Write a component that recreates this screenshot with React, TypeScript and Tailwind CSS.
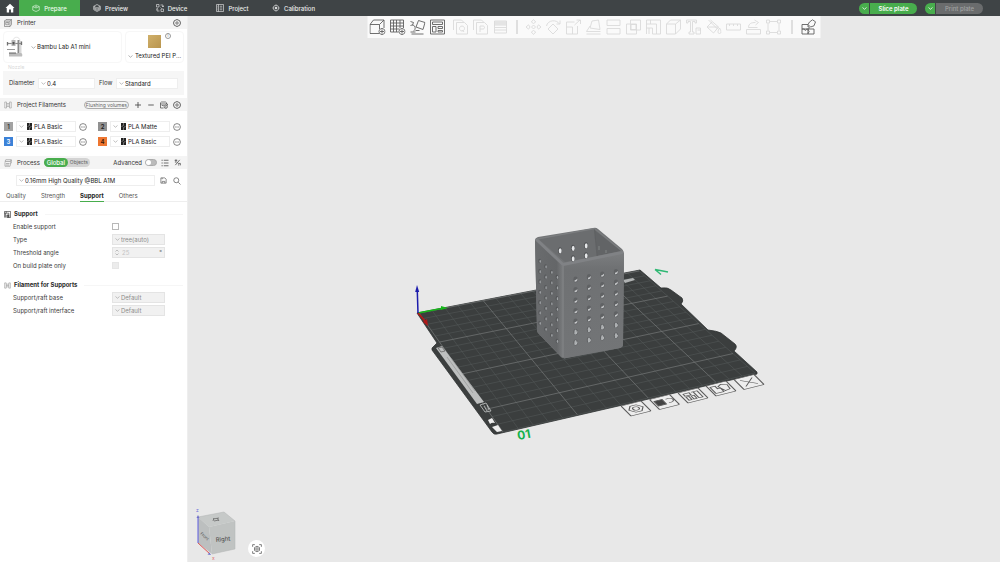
import React, { useState } from "react";

type IconProps = { className?: string };

function Icon({ className = "size-2", children }: { className?: string; children: React.ReactNode }) {
  return (
    <svg
      viewBox="0 0 16 16"
      className={`shrink-0 ${className}`}
      fill="none"
      stroke="currentColor"
      strokeWidth={1.2}
      strokeLinejoin="round"
      aria-hidden="true"
    >
      {children}
    </svg>
  );
}

const HomeIcon = ({ className }: IconProps) => (
  <Icon className={className}>
    <path d="M8 1 0.8 8h2v7h3.7v-4.5h3V15h3.7V8h2z" fill="currentColor" stroke="none" />
  </Icon>
);
const PrepareIcon = ({ className }: IconProps) => (
  <Icon className={className}>
    <path d="M5 3.500 1.500 5.200v7L8 15l6.500-2.800v-7L11 3.500M1.500 5.200 8 8l6.500-2.800M5 3.500 8 2l3 1.500M6 5l2 1 2-1" />
  </Icon>
);
const PreviewIcon = ({ className }: IconProps) => (
  <Icon className={className}>
    <path d="M8 1 14.500 4.500v7L8 15l-6.500-3.500v-7zM1.500 4.500 8 8l6.500-3.500M1.500 7 8 10.500 14.500 7M1.500 9.300 8 12.800l6.500-3.500" />
  </Icon>
);
const DeviceIcon = ({ className }: IconProps) => (
  <Icon className={className}>
    <path d="M1 1h5v5H1zM10 10h5v5h-5zM9 2h5v4M2 9v5h5M12 4l2 2 1.500-2M4.500 11 2 9 .800 11M9 7l2 2" />
  </Icon>
);
const ProjectIcon = ({ className }: IconProps) => (
  <Icon className={className}>
    <path d="M1 1h14v14H1zM5 1v14M7.500 4.500h5M7.500 8h5M7.500 11.500h5M2.500 4.500h1M2.500 8h1M2.500 11.500h1" />
  </Icon>
);
const CalibrationIcon = ({ className }: IconProps) => (
  <Icon className={className}>
    <circle cx="8" cy="8" r="5.500" />
    <circle cx="8" cy="8" r="2" fill="currentColor" />
    <path d="M8 .800v2M8 13.200v2M.800 8h2M13.200 8h2" />
  </Icon>
);
const GearIcon = ({ className }: IconProps) => (
  <Icon className={className}>
    <path d="M5.500 1.500h5l1 1.700 2 .300L15 8l-1.500 4.500-2 .300-1 1.700h-5l-1-1.700-2-.300L1 8l1.500-4.500 2-.300z" strokeWidth={1.600} />
    <circle cx="8" cy="8" r="2.400" strokeWidth={1.400} />
  </Icon>
);
const PrinterIcon = ({ className }: IconProps) => (
  <Icon className={className}>
    <path d="M1 4h11v11H1zM1 4l3-3h11v10l-3 4M12 4l3-3M3.500 6.500h6v5h-6zM6.500 6.500V9" />
  </Icon>
);
const SpoolIcon = ({ className }: IconProps) => (
  <Icon className={className}>
    <path d="M1.500 2v12M5 2v12M11 2v12M14.500 2v12M1.500 2H5M1.500 14H5M11 2h3.500M11 14h3.500M5 5h6M5 8h6M5 11h6" />
  </Icon>
);
const ProcessIcon = ({ className }: IconProps) => (
  <Icon className={className}>
    <path d="M3.500 1.500h11L13 5H2zM2 6.500v8h10l1.500-8M14.500 1.500v7M4 9h7M4 12h6" />
  </Icon>
);
const PlusIcon = ({ className }: IconProps) => (
  <Icon className={className}>
    <path d="M8 2v12M2 8h12" strokeWidth={1.700} />
  </Icon>
);
const MinusIcon = ({ className }: IconProps) => (
  <Icon className={className}>
    <path d="M2.500 8h11" strokeWidth={1.700} />
  </Icon>
);
const SyncIcon = ({ className }: IconProps) => (
  <Icon className={className}>
    <path d="M1 6V3.500L3 2h8l2 1.500V6M1 6h14v3M1 6v8h6M3.500 9h4" strokeWidth={1.400} />
    <circle cx="11.500" cy="11.500" r="3.300" strokeWidth={1.400} />
    <path d="M11.500 9.500v4" />
  </Icon>
);
const MoreIcon = ({ className }: IconProps) => (
  <Icon className={className}>
    <circle cx="8" cy="8" r="6.800" strokeWidth={1.400} />
    <path d="M4.500 8h7" strokeWidth={1.600} strokeDasharray="1.800 .800" />
  </Icon>
);
const ListIcon = ({ className }: IconProps) => (
  <Icon className={className}>
    <path d="M1 2.500h2.500M1 8h2.500M1 13.500h2.500M5.500 2.500H15M5.500 8H15M5.500 13.500H15" strokeWidth={1.500} />
  </Icon>
);
const CompareIcon = ({ className }: IconProps) => (
  <Icon className={className}>
    <path d="M3 14 13 2M1.500 3h6M4.500 1v5M9 10h5.500v4.500M9 13.500h3M2 7h4" strokeWidth={1.700} />
  </Icon>
);
const SaveIcon = ({ className }: IconProps) => (
  <Icon className={className}>
    <path d="M2 2h9l3 3v9H2zM5 14v-4h6v4M5 2v3" strokeWidth={1.500} />
  </Icon>
);
const SearchIcon = ({ className }: IconProps) => (
  <Icon className={className}>
    <circle cx="6.500" cy="6.500" r="5" strokeWidth={1.400} />
    <path d="m10.500 10.500 4.500 4.500" strokeWidth={1.400} />
  </Icon>
);
const SupportIcon = ({ className }: IconProps) => (
  <Icon className={className}>
    <path d="M1 15V1h14v14h-4M1 5h10v10M5 1v4M3.500 5v10" strokeWidth={1.400} />
    <path d="M6.500 9H11v6H6.500z" fill="currentColor" fillOpacity="0.600" />
  </Icon>
);
const Chevron = ({ className = "" }: IconProps) => (
  <svg viewBox="0 0 10 6" className={`h-[3px] w-[5px] shrink-0 ${className}`} fill="none" stroke="currentColor" strokeWidth={1.500} aria-hidden="true">
    <path d="m1 1 4 3.500L9 1" />
  </svg>
);

type SelectBoxProps = { id?: string; label?: string; value: string; disabled?: boolean; filament?: boolean; className?: string };

function SelectBox({ id, label, value, disabled, filament, className = "" }: SelectBoxProps) {
  return (
    <div
      className={`relative flex h-[11px] items-center border ${
        disabled ? "border-[#e4e4e4] bg-[#f1f1f1] text-[#8c8c8c]" : "border-[#eeeeee] bg-white text-[#222222]"
      } ${className}`}
    >
      <Chevron className="pointer-events-none absolute left-[2px] text-[#aaaaaa]" />
      {filament && (
        <svg viewBox="0 0 10 14" className="pointer-events-none absolute left-[10px] h-[7px] w-[5px]" aria-hidden="true">
          <path d="M0 0h10v14H0z" fill="#222" />
          <path d="M5 0v5L1 7M5 9v5M5 9l4-2" stroke="#aaa" strokeWidth="1.200" fill="none" />
        </svg>
      )}
      <select
        id={id}
        aria-label={label}
        disabled={disabled}
        className={`h-full w-full appearance-none truncate bg-transparent leading-[9px] opacity-100 outline-none ${filament ? "pl-[17px]" : "pl-[8px]"}`}
      >
        <option>{value}</option>
      </select>
    </div>
  );
}

const TABS = [
  { name: "Prepare", icon: PrepareIcon },
  { name: "Preview", icon: PreviewIcon },
  { name: "Device", icon: DeviceIcon },
  { name: "Project", icon: ProjectIcon },
  { name: "Calibration", icon: CalibrationIcon },
];

function TopBar() {
  return (
    <header className="flex h-4 shrink-0 items-center bg-[#3f4446] text-[6px] text-white">
      <button aria-label="Home" className="flex h-full w-[19px] items-center justify-center">
        <HomeIcon className="size-[10px]" />
      </button>
      <nav className="flex h-full">
        {TABS.map(({ name, icon: TabIcon }, i) => (
          <button
            key={name}
            className={`flex h-full w-[61px] items-center justify-center gap-[4px] font-medium ${i === 0 ? "bg-[#48ad4d] text-[#eefbee]" : "text-[#eeeeee]"}`}
          >
            <TabIcon className="size-[8px]" />
            {name}
          </button>
        ))}
      </nav>
      <div className="mr-[17px] ml-auto flex gap-2 font-medium">
        <div className="flex h-[11px] gap-px">
          <button aria-label="Slice options" className="flex w-[10px] items-center justify-center rounded-l-full bg-[#48ad4d]">
            <Chevron />
          </button>
          <button className="w-[47px] rounded-r-full bg-[#48ad4d] leading-[11px] font-semibold">Slice plate</button>
        </div>
        <div className="flex h-[11px] gap-px">
          <button aria-label="Print options" className="flex w-[10px] items-center justify-center rounded-l-full bg-[#48ad4d]">
            <Chevron />
          </button>
          <button disabled className="w-[47px] rounded-r-full bg-[#6a6c6d] leading-[11px] text-[#a0a2a2]">
            Print plate
          </button>
        </div>
      </div>
    </header>
  );
}

function SectionHeader({ icon, title, children }: { icon: React.ReactNode; title: string; children?: React.ReactNode }) {
  return (
    <div className="flex h-[13px] items-center bg-[#f4f4f4] pr-[6px] pl-[4px] text-[#666666]">
      {icon}
      <h2 className="ml-[5px] text-[#333333]">{title}</h2>
      {children}
    </div>
  );
}

const FILAMENTS = [
  { id: 1, name: "PLA Basic", chip: "bg-[#a3a3a3] text-[#333333]" },
  { id: 2, name: "PLA Matte", chip: "bg-[#919191] text-[#222222]" },
  { id: 3, name: "PLA Basic", chip: "bg-[#3c82d8] text-white" },
  { id: 4, name: "PLA Basic", chip: "bg-[#ee7630] text-[#33180a]" },
];

function PrinterPicture() {
  return (
    <svg viewBox="0 0 20 24" className="h-6 w-5 shrink-0" aria-hidden="true">
      <path d="M8 6c0-5 7-5 7 0" fill="none" stroke="#dddddd" strokeWidth="0.800" />
      <path d="M13.500 5v14" stroke="#8a8a8a" strokeWidth="2" />
      <path d="M15.500 6v13" stroke="#d8d8d8" strokeWidth="2" />
      <path d="M2 8.500h14" stroke="#8c8c8c" strokeWidth="1.200" />
      <path d="M6.500 5h4v6h-4z" fill="#b5b5b5" />
      <path d="M7.500 7h2v2.500h-2z" fill="#555" />
      <path d="M2 14.500h8" stroke="#9a9a9a" strokeWidth="1" />
      <path d="M4 18h12q2 1 1 3.500H4z" fill="#bcbcbc" />
      <path d="M4 18h7" stroke="#444" strokeWidth="0.800" />
      <path d="M2.500 7v3.500M16.500 6.500v3.500" stroke="#707070" strokeWidth="1.300" />
    </svg>
  );
}

function PrinterPanel() {
  return (
    <section>
      <SectionHeader icon={<PrinterIcon className="size-2" />} title="Printer">
        <button aria-label="Printer settings" className="ml-auto text-[#444444]">
          <GearIcon className="size-[8px]" />
        </button>
      </SectionHeader>
      <div className="mx-[3px] mt-[2px] flex h-8 gap-[3px]">
        <div className="flex flex-1 items-center gap-[6px] rounded-sm border border-[#f7f7f7] pl-px">
          <PrinterPicture />
          <button className="flex items-center gap-px text-[#222222]">
            <Chevron className="text-[#999999]" />
            Bambu Lab A1 mini
          </button>
        </div>
        <div className="relative flex w-[59px] flex-col items-center justify-between rounded-sm border border-[#f7f7f7] pt-[3px]">
          <span className="size-[13px] bg-[#c5a35c] bg-linear-to-br from-[#d0b06a] to-[#b9954e]" />
          <button aria-label="Plate information" className="absolute top-px right-[12px] flex size-[6px] items-center justify-center rounded-full border border-[#999999] text-[4px] leading-[4px] text-[#777777]">
            i
          </button>
          <button className="flex items-center gap-[2px] leading-[12px] whitespace-nowrap text-[#222222]">
            <Chevron className="text-[#999999]" />
            Textured PEI P...
          </button>
        </div>
      </div>
      <p className="ml-2 h-[8px] text-[5px] leading-[8px] text-[#d8d8d8]">Nozzle</p>
      <div className="mx-[3px] mb-[3px] flex h-6 items-center bg-[#f6f6f6] px-[6px]">
        <label htmlFor="diameter" className="w-[29px]">Diameter</label>
        <SelectBox id="diameter" value="0.4" className="w-[57px]" />
        <label htmlFor="flow" className="ml-[4px] w-[17px]">Flow</label>
        <SelectBox id="flow" value="Standard" className="flex-1" />
      </div>
    </section>
  );
}

function FilamentPanel() {
  return (
    <section>
      <SectionHeader icon={<SpoolIcon className="size-2 text-[#999999]" />} title="Project Filaments">
        <div className="ml-auto flex items-center gap-[5px] text-[#444444]">
          <button className="h-[8px] rounded-full border border-[#aaaaaa] px-px text-[5px] leading-[6px] whitespace-nowrap text-[#666666]">
            Flushing volumes
          </button>
          <button aria-label="Add filament"><PlusIcon className="size-[8px]" /></button>
          <button aria-label="Remove filament"><MinusIcon className="size-[8px]" /></button>
          <button aria-label="Sync filaments"><SyncIcon className="size-[8px]" /></button>
          <button aria-label="Filament settings"><GearIcon className="size-[8px]" /></button>
        </div>
      </SectionHeader>
      <div className="grid grid-cols-2 gap-x-[11px] gap-y-[4px] pt-[10px] pr-[6px] pb-[9px] pl-[4px]">
        {FILAMENTS.map((f) => (
          <div key={f.id} className="flex items-center">
            <span className={`flex size-[9px] items-center justify-center font-semibold ${f.chip}`}>{f.id}</span>
            <SelectBox filament label={`Filament ${f.id}`} value={f.name} className="mr-[3px] ml-[3px] flex-1" />
            <button aria-label={`Edit filament ${f.id}`} className="text-[#555555]">
              <MoreIcon className="size-[8px]" />
            </button>
          </div>
        ))}
      </div>
    </section>
  );
}

function ProcessPanel() {
  const [advanced, setAdvanced] = useState(false);
  return (
    <section>
      <SectionHeader icon={<ProcessIcon className="size-2 text-[#888888]" />} title="Process">
        <div className="ml-[4px] flex h-[9px] items-center rounded-full bg-[#d3d3d3] leading-[9px]">
          <button className="h-full w-6 rounded-full bg-[#48ad4d] font-medium text-white">Global</button>
          <button className="flex h-full w-[22px] items-center justify-center text-[5px] text-[#666666]">Objects</button>
        </div>
        <div className="ml-auto flex items-center text-[#444444]">
          <label htmlFor="advanced" className="mr-[3px] text-[#333333]">Advanced</label>
          <input
            id="advanced"
            type="checkbox"
            role="switch"
            checked={advanced}
            onChange={() => setAdvanced(!advanced)}
            className="h-[7px] w-[12px] appearance-none rounded-full border border-[#aaaaaa] bg-[#bbbbbb] before:block before:size-[5px] before:rounded-full before:bg-white checked:bg-[#48ad4d] checked:before:ml-auto"
          />
          <button aria-label="Setting list" className="ml-[4px]"><ListIcon className="size-[8px]" /></button>
          <button aria-label="Compare presets" className="ml-[5px]"><CompareIcon className="size-[7px]" /></button>
        </div>
      </SectionHeader>
      <div className="mt-[6px] flex items-center pr-[6px] pl-4 text-[#555555]">
        <SelectBox label="Process preset" value="0.16mm High Quality @BBL A1M" className="flex-1" />
        <button aria-label="Save preset" className="ml-[5px]"><SaveIcon className="size-[7px]" /></button>
        <button aria-label="Search settings" className="ml-[6px]"><SearchIcon className="size-[8px]" /></button>
      </div>
      <div role="tablist" className="mt-[4px] flex h-[12px] gap-[15px] border-b border-[#eeeeee] pl-[6px]">
        {["Quality", "Strength", "Support", "Others"].map((tab) => (
          <button
            key={tab}
            role="tab"
            aria-selected={tab === "Support"}
            className={`-mb-px border-b leading-[10px] ${
              tab === "Support" ? "border-[#48ad4d] font-bold text-[#222222]" : "border-transparent text-[#555555]"
            }`}
          >
            {tab}
          </button>
        ))}
      </div>
    </section>
  );
}

function GroupTitle({ icon, title }: { icon: React.ReactNode; title: string }) {
  return (
    <h3 className="flex h-[12px] items-center gap-[3px] pl-[4px] font-bold text-[#2a2a2a]">
      {icon}
      {title}
      <span className="mr-[4px] ml-1 h-px flex-1 bg-[#f6f6f6]" />
    </h3>
  );
}

function Field({ id, label, children }: { id: string; label: string; children: React.ReactNode }) {
  return (
    <div className="flex h-[13px] items-center pl-[13px]">
      <label htmlFor={id} className="w-[99px] text-[#3a3a3a]">{label}</label>
      {children}
    </div>
  );
}

function SupportSettings() {
  return (
    <section className="pt-[6px]">
      <GroupTitle icon={<SupportIcon className="size-[7px]" />} title="Support" />
      <div>
        <Field id="enable" label="Enable support">
          <input id="enable" type="checkbox" className="size-[7px] appearance-none border border-[#b8b8b8] bg-white checked:bg-[#48ad4d]" />
        </Field>
        <Field id="type" label="Type">
          <SelectBox id="type" disabled value="tree(auto)" className="w-[53px]" />
        </Field>
        <Field id="angle" label="Threshold angle">
          <div className="flex h-[11px] w-[53px] items-center border border-[#e4e4e4] bg-[#f1f1f1] pl-[2px] text-[#c4c4c4]">
            <svg viewBox="0 0 8 14" className="h-[7px] w-[4px]" fill="none" stroke="#aaaaaa" strokeWidth="1.500" aria-hidden="true">
              <path d="m1 5 3-3 3 3M1 9l3 3 3-3" />
            </svg>
            <input id="angle" disabled defaultValue="25" className="h-full w-0 flex-1 bg-transparent pl-[3px]" />
            <span className="pr-[2px] text-[#777777]">°</span>
          </div>
        </Field>
        <Field id="plateonly" label="On build plate only">
          <input id="plateonly" type="checkbox" disabled className="size-[7px] appearance-none border border-[#e6e6e6] bg-[#ececec]" />
        </Field>
      </div>
      <div className="mt-[7px]">
        <GroupTitle icon={<SpoolIcon className="size-[7px] text-[#888888]" />} title="Filament for Supports" />
        <Field id="base" label="Support/raft base">
          <SelectBox id="base" disabled value="Default" className="w-[53px]" />
        </Field>
        <Field id="interface" label="Support/raft interface">
          <SelectBox id="interface" disabled value="Default" className="w-[53px]" />
        </Field>
      </div>
    </section>
  );
}

type Tool = { name: string; d: string };
const ADD_TOOLS: Tool[] = [
  { name: "Add object", d: "M10 14.500H.500V5.500H10V10M.500 5.500 4 1h10.500L10 5.500M14.500 1v8M12.500 9.500a3 3 0 1 0 .010 0M12.500 10.500v4M10.500 12.500h4" },
  { name: "Add plate", d: "M1 1h13v8M1 1v12h8M1 4h13M1 7h13M1 10h9M4 1v12M7 1v12M10.500 1v8M12.500 9.500a3 3 0 1 0 .010 0M12.500 10.500v4M10.500 12.500h4" },
  { name: "Auto orient", d: "M6.500 8 9 1.500l6.500 2-2 7zM1 2.500l3 1L3 6M1 6.500c5-2 6 4 3 5.500M6 11.500h4M1 13h5M2 15h12" },
  { name: "Arrange", d: "M1 1h14v14H1zM3 3h10v2.500H3zM3 7.500h3.500V13H3zM8.500 7.500H13v2H8.500zM8.500 11.500H13V13H8.500z" },
];
const COPY_TOOLS: Tool[] = [
  { name: "Split to objects", d: "M1 11V1h8l2 2M4 3.500h8l3 3V15H4zM9.500 7a2.500 2.500 0 1 0 .010 0M10 11l1.500 2" },
  { name: "Split to parts", d: "M1 11V1h8l2 2M4 3.500h8l3 3V15H4zM7.500 13V7h3c2 0 2 3 0 3h-3" },
  { name: "Variable layer height", d: "M2 2h12v12H2zM2 3h12M2 4h12M2 5h12M2 6h12M2 8.500h12M2 11h12" },
];
const EDIT_TOOLS: Tool[] = [
  { name: "Move", d: "M8 .500 5.800 3 8 4.500 10.200 3zM8 15.500 5.800 13 8 11.500l2.200 1.500zM.500 8 3 5.800 4.500 8 3 10.200zM15.500 8 13 5.800 11.500 8l1.500 2.200zM8 6 10 8 8 10 6 8z" },
  { name: "Rotate", d: "m7.500 5 5 5-5 5-5-5zM1 7c1-6 10-7 13-2M14.500 1.500V5H11" },
  { name: "Scale", d: "M1 3h8M1 3v12h11V7M1 8h6v7M9 6l5.500-5M11 1h4v4" },
  { name: "Lay on face", d: "m4.500 9 2-7L13 1l1.500 9.500zM4.500 7 1 12.500h14M1 15h14" },
  { name: "Cut", d: "M1.500 6.500V1h13v5.500zM1.500 9.500h13V15h-13z" },
  { name: "Mesh boolean", d: "M5 1h10v10H5zM1 5h10v10H1zM5.500 5.500h5v5h-5z" },
  { name: "Supports", d: "M1 15V1h14v14h-4M1 5h10v10M5 1v4M1 9h6M3.500 9v6M7 9v6h4" },
  { name: "Seam", d: "M1 5h9v10H1zM1 5l4-4h10l-5 4M15 1v9l-5 5" },
  { name: "Text", d: "M1 1h10v3H9.500V2.500H7V13h1.500v2h-5v-2H5V2.500H2.500V4H1zM10.500 9H15v6h-4.500zM12 11h3" },
  { name: "Color painting", d: "M6.500 3 1.500 8 8 14l5-6-8-7M3 1l9 9M2 8h11M14 9c2 3 2 5.500 0 5.500s-2-2.500 0-5.500" },
  { name: "Measure", d: "M1 5h14v6H1zM4 5v2M8 5v2M12 5v2" },
  { name: "Assembly", d: "M1 10.500h14V15H1zM3 8.500h9M3 8.500c0-4 3-5 7-5M9 1l4 2.500L10 6" },
  { name: "Simplify", d: "M4.500 2.500h7M4.500 13.500h7M2.500 4.500v7M13.500 4.500v7M1 1h3v3H1zM12 1h3v3h-3zM1 12h3v3H1zM12 12h3v3h-3z" },
];
const ASSEMBLY_VIEW: Tool = {
  name: "Assembly view",
  d: "M1.500 5.500h6V8c1.800-.800 1.800 2.500 0 1.800V10H1.500zM1.500 10H4c-.500 1.800 2.200 1.800 1.800 0h1.700v5h-6zM7.500 10h6v5h-6v-1.500c1.500.500 1.500-2.500 0-2zM9 3 12 .800l3 2-1.500 4L10 8 7.500 5.500z",
};

function ToolButton({ tool, disabled }: { tool: Tool; disabled?: boolean }) {
  return (
    <button aria-label={tool.name} disabled={disabled} className={`flex w-5 items-center justify-center ${disabled ? "text-[#dadada]" : "text-[#606060]"}`}>
      <svg viewBox="0 0 16 16" className="size-4" fill="none" stroke="currentColor" strokeWidth="0.900" strokeLinejoin="round" aria-hidden="true">
        <path d={tool.d} />
      </svg>
    </button>
  );
}

function Toolbar() {
  return (
    <div role="toolbar" className="absolute top-0 left-1/2 flex h-[22px] -translate-x-1/2 items-stretch bg-[#fafafa] pr-[2px]">
      {ADD_TOOLS.map((t) => <ToolButton key={t.name} tool={t} />)}
      <div className="ml-[3px] flex">
        {COPY_TOOLS.map((t) => <ToolButton key={t.name} tool={t} disabled />)}
      </div>
      <span className="mx-[6px] my-[4px] w-px bg-[#c4c4c4]" />
      {EDIT_TOOLS.map((t) => <ToolButton key={t.name} tool={t} disabled />)}
      <span className="mr-[6px] ml-[8px] my-[4px] w-px bg-[#c4c4c4]" />
      <ToolButton tool={ASSEMBLY_VIEW} />
    </div>
  );
}

type Point = [number, number];

// Projects bed coordinates (0..1 on each axis) onto the four given corners.
function makeProjection(p0: Point, p1: Point, p2: Point, p3: Point) {
  const dx1 = p1[0] - p2[0], dx2 = p3[0] - p2[0], dx3 = p0[0] - p1[0] + p2[0] - p3[0];
  const dy1 = p1[1] - p2[1], dy2 = p3[1] - p2[1], dy3 = p0[1] - p1[1] + p2[1] - p3[1];
  const det = dx1 * dy2 - dx2 * dy1;
  const g = (dx3 * dy2 - dx2 * dy3) / det;
  const h = (dx1 * dy3 - dx3 * dy1) / det;
  const a = p1[0] - p0[0] + g * p1[0], b = p3[0] - p0[0] + h * p3[0];
  const d = p1[1] - p0[1] + g * p1[1], e = p3[1] - p0[1] + h * p3[1];
  return (u: number, v: number): Point => {
    const w = g * u + h * v + 1;
    return [(a * u + b * v + p0[0]) / w, (d * u + e * v + p0[1]) / w];
  };
}

const project = makeProjection([419, 313], [639, 271], [755, 373], [503, 432]);

function gridPath(bold: boolean) {
  let d = "";
  for (let i = 0; i <= 18; i++) {
    if ((i % 5 === 0) !== bold) continue;
    const t = i / 18;
    d += `M${project(t, 0).join(" ")}L${project(t, 1).join(" ")}M${project(0, t).join(" ")}L${project(1, t).join(" ")}`;
  }
  return d;
}

const LEFT_COLUMNS = [
  { x: 539.700, top: 261, bottom: 323 },
  { x: 545.600, top: 266.500, bottom: 329 },
  { x: 551.400, top: 272, bottom: 335 },
  { x: 557, top: 277, bottom: 341 },
];
const RIGHT_COLUMNS = [
  { x: 575.600, top: 279.500, bottom: 342.500 },
  { x: 589, top: 277, bottom: 340 },
  { x: 602.300, top: 274.500, bottom: 337.500 },
  { x: 616, top: 272, bottom: 335.500 },
];
const ROWS = [0, 1, 2, 3, 4, 5, 6];

const PLATE_ICONS = [
  { x: 636, y: 408.500, d: "M-3-6h6l4 6-4 6h-6l-4-6zM-3 0a3 3 0 1 0 6 0a3 3 0 1 0-6 0" },
  { x: 664.500, y: 402, d: "M3-4q6-1 6 3t-6 4", fill: "M-8-5h8v9h-8z" },
  { x: 693, y: 395.500, d: "M-7-6h6v4h-6zM-7 0h3v6h-3zM-2 0h3v6h-3zM1-6h6M3-6v12M7-6v12H3" },
  { x: 721, y: 388.500, d: "M-8 6v-12h5v5h3v7h-8M-1-4l4-3 5 3-1 8-5 1z" },
  { x: 749, y: 382, d: "M-6-6 6 6M6-6-6 6" },
];

function Scene() {
  return (
    <svg viewBox="188 16 812 546" preserveAspectRatio="xMidYMid meet" className="block h-full w-full" role="img" aria-label="Build plate with model">
      <defs>
        <linearGradient id="sideR" x1="0" y1="0" x2="0" y2="1">
          <stop offset="0" stopColor="#7b7d7f" />
          <stop offset="0.150" stopColor="#6f7173" />
          <stop offset="1" stopColor="#737577" />
        </linearGradient>
        <linearGradient id="sideL" x1="0" y1="0" x2="1" y2="0">
          <stop offset="0" stopColor="#6a6c6e" />
          <stop offset="0.800" stopColor="#646668" />
          <stop offset="1" stopColor="#77797b" />
        </linearGradient>
      </defs>

      <path
        d="M417 313 640 270 661 288Q668 287 671 290L682 298Q684 301 681 304L708 330Q717 331 721 333L735 344Q738 347 734 351L757 372V374L497 434Q494 435 492 432L432 350V348L437 343Z"
        fill="#3b3e3e"
        stroke="#303333"
        strokeWidth="0.800"
      />
      <path d={gridPath(false)} stroke="#535757" strokeWidth="0.600" />
      <path d={gridPath(true)} stroke="#757979" strokeWidth="0.700" />
      <path d="m436 348 6-2 42 56-7 2z" fill="#bdbfbf" />
      <path d="m438 348 4-1 3 4-4 1z" fill="none" stroke="#666" strokeWidth="0.800" />
      <path d="m447 357 26 36M451 358l24 33" fill="none" stroke="#8f9191" strokeWidth="0.600" />
      <path d="m480 405 6-2 5 8-6 1zM484 406l3 5M487 405l2 5" fill="none" stroke="#c4c6c6" strokeWidth="0.800" />
      <path d="m488 420 4-2 3 5q-3-1-5 1zM492 427q3-1 6-2l4 6-5 1z" fill="#eeeeee" />
      <path d="m623 280 10-2 2 2-10 3z" fill="#b0b3b3" />

      <path d="M418 313 444 308" stroke="#16b61a" strokeWidth="1.600" />
      <path d="m441 306 7 2-7 2z" fill="#16b61a" />
      <path d="M418 313 425 321" stroke="#b01818" strokeWidth="1.800" />
      <path d="m427 319 1 7-5-4z" fill="#b01818" />
      <path d="M418 313 417.300 291" stroke="#1c1cac" strokeWidth="1.500" />
      <path d="m417 285 2.200 7h-4z" fill="#1c1cac" />

      <path d="M655 269.500 668 272M655 269.500l6 5" stroke="#2eb873" strokeWidth="1.500" fill="none" />
      <text x="518" y="440" transform="rotate(-10 518 440)" fill="#14b24c" fontSize="12" fontWeight="700" fontFamily="Inter, sans-serif">01</text>

      <path d="M535 240Q535 238 538 237L593 228Q596 227 598 229L622 249Q624 251 624 254L623 345Q623 347 620 348L566 358Q563 359 561 357L538 333Q537 332 537 330Z" fill="#737577" />
      <path d="M535 240 562 264V357.500L538 333Q537 332 537 330Z" fill="url(#sideL)" />
      <path d="M563 264 624 253 623 345Q623 347 620 348L564 358.500Z" fill="url(#sideR)" />
      <path d="M539 239.500 594 229.500 597 256 565 262z" fill="#6b6d6f" />
      <path d="M594 229.500 621 251 597 256z" fill="#626466" />
      <path d="M594.500 229.500 597 256" stroke="#5c5e60" strokeWidth="0.600" />
      <path d="M537 240 563 264.500 622 252.500" fill="none" stroke="#808285" strokeWidth="3" strokeLinejoin="round" strokeLinecap="round" />
      <path d="M537 239 594.500 228.500 622 251" fill="none" stroke="#7c7e80" strokeWidth="1" />
      <path d="M563 266v91" stroke="#7c7e80" strokeWidth="2" />

      {[[560, 250.500], [573, 248], [586, 245.500], [573, 258.500], [586, 255.500]].map(([x, y]) => (
        <g key={`${x}-${y}`}>
          <ellipse cx={x} cy={y} rx="1.900" ry="3.200" fill="#505254" />
          <ellipse cx={x + 0.200} cy={y + 0.300} rx="1.400" ry="2.600" fill="#e5e7e9" />
        </g>
      ))}
      <path d="M599 246v4M606 250v3" stroke="#77797b" strokeWidth="1.500" />
      {LEFT_COLUMNS.map((c) =>
        ROWS.map((r) => {
          const y = c.top + ((c.bottom - c.top) * r) / 6;
          return (
            <g key={`${c.x}-${r}`}>
              <ellipse cx={c.x} cy={y} rx="1.400" ry="2.300" fill="#56585a" />
              <ellipse cx={c.x + 0.500} cy={y + 0.300} rx="0.700" ry="1.600" fill="#a0a3a6" />
            </g>
          );
        }),
      )}
      {RIGHT_COLUMNS.map((c) =>
        ROWS.map((r) => {
          const y = c.top + ((c.bottom - c.top) * r) / 6;
          return (
            <g key={`${c.x}-${r}`}>
              <ellipse cx={c.x} cy={y} rx="2.200" ry="3" fill="#606264" />
              <path d={`M${c.x - 1} ${y + 2.300}q3 .300 2.800-3.300q-1.200 1.500-2.800 1.800z`} fill="#c4c6c8" />
              {r > 4 && <ellipse cx={c.x} cy={y} rx="1.200" ry="2.500" fill="#adb0b2" />}
            </g>
          );
        }),
      )}

      {PLATE_ICONS.map((icon) => (
        <g key={icon.x} transform={`matrix(1 -.25 .5 .5 ${icon.x} ${icon.y})`} fill="none" stroke="#5c5c5c" strokeWidth="1.100">
          <rect x="-10" y="-10" width="20" height="20" rx="1" fill="#ededed" />
          <path d={icon.d} />
          {icon.fill && <path d={icon.fill} fill="#444444" />}
        </g>
      ))}
    </svg>
  );
}

function ViewCube() {
  return (
    <svg viewBox="0 0 48 58" className="h-[58px] w-12" role="img" aria-label="View cube" fontFamily="Inter, sans-serif">
      <path d="M5 13 31 8 42 17 16 23z" fill="#c6c9c8" />
      <path d="M5 13 16 23 19 50 5 39z" fill="#bcbfbf" />
      <path d="M16 23 42 17V45L19 50z" fill="#c0c3c2" />
      <path d="M5 13 31 8 42 17V45L19 50" fill="none" stroke="#b2b5b5" strokeWidth="0.500" />
      <path d="M5 39V13" stroke="#5d5de0" strokeWidth="1" />
      <path d="M5 39 17 50" stroke="#e05555" strokeWidth="1" />
      <path d="M5 11 6.500 14h-3zM18 51l-3.500-.500 2-2z" fill="#7070c8" />
      <path d="m20 15 6-1M21 17l5-1M24 14l2 3M21 14l-1 3" stroke="#6c6c6c" strokeWidth="0.800" />
      <text x="23" y="38" transform="rotate(-6 23 38)" fontSize="6" fill="#3f4141">Right</text>
      <text x="7" y="30" transform="rotate(42 7 30)" fontSize="4" fill="#4c4e4e">Front</text>
      <text x="3" y="8" fontSize="5" fill="#6b6bd8">z</text>
      <text x="19" y="56" fontSize="5" fill="#e06a6a">x</text>
    </svg>
  );
}

export default function App() {
  return (
    <div className="flex h-screen flex-col bg-white font-['Inter',sans-serif] text-[#333333] select-none">
      <TopBar />
      <div className="flex min-h-0 flex-1">
        <aside className="w-[188px] shrink-0 overflow-hidden border-r border-[#eeeeee] bg-white text-[6px] leading-[10px]">
          <PrinterPanel />
          <FilamentPanel />
          <ProcessPanel />
          <SupportSettings />
        </aside>
        <main className="relative min-w-0 flex-1 bg-[#e8e8e8]">
          <Scene />
          <Toolbar />
          <div className="absolute bottom-0 left-[5px] flex items-end gap-[7px]">
            <ViewCube />
            <button aria-label="Fit view" className="mb-[5px] flex size-[17px] items-center justify-center rounded-full bg-white text-[#555555]">
              <Icon className="size-[10px]">
                <path d="M1 4.500V1h3.500M11.500 1H15v3.500M15 11.500V15h-3.500M4.500 15H1v-3.500M8 3.500l4 2.200v4.600l-4 2.200-4-2.200V5.700z" />
                <circle cx="8" cy="8" r="2" />
              </Icon>
            </button>
          </div>
        </main>
      </div>
    </div>
  );
}
